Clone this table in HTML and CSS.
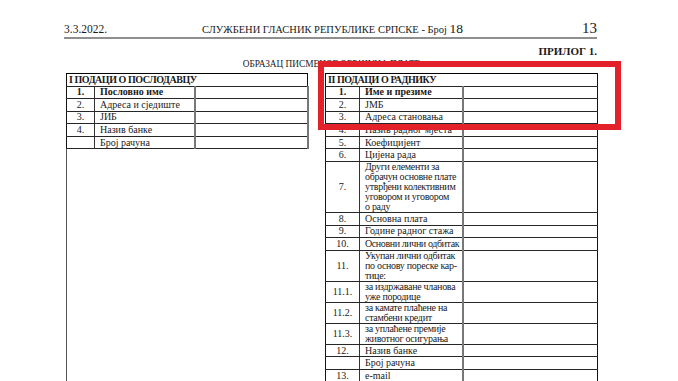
FILE: index.html
```html
<!DOCTYPE html>
<html lang="sr">
<head>
<meta charset="utf-8">
<title>Образац писменог обрачуна плате</title>
<link rel="stylesheet" href="styles.css">
</head>
<body>
<div class="page">
  <header class="running">
    <span class="date">3.3.2022.</span>
    <span class="journal">СЛУЖБЕНИ ГЛАСНИК РЕПУБЛИКЕ СРПСКЕ - Број <span class="big">18</span></span>
    <span class="pageno">13</span>
  </header>
  <div class="annex">ПРИЛОГ 1.</div>
  <div class="title">ОБРАЗАЦ ПИСМЕНОГ ОБРАЧУНА ПЛАТЕ</div>
  <div class="cols">
    <div class="leftcol">
      <table class="form employer">
        <colgroup><col class="c-num"><col class="c-lbl"><col class="c-val"></colgroup>
        <tr class="head"><td colspan="3">I ПОДАЦИ О ПОСЛОДАВЦУ</td></tr>
        <tr class="bold"><td class="num">1.</td><td class="lbl">Пословно име</td><td class="val"></td></tr>
        <tr><td class="num">2.</td><td class="lbl">Адреса и сједиште</td><td class="val"></td></tr>
        <tr><td class="num">3.</td><td class="lbl">ЈИБ</td><td class="val"></td></tr>
        <tr><td class="num">4.</td><td class="lbl">Назив банке</td><td class="val"></td></tr>
        <tr><td class="num"></td><td class="lbl">Број рачуна</td><td class="val"></td></tr>
      </table>
      <div class="blank"></div>
    </div>
    <table class="form worker">
      <colgroup><col class="c-num"><col class="c-lbl"><col class="c-val"></colgroup>
      <tr class="head"><td colspan="3">II ПОДАЦИ О РАДНИКУ</td></tr>
      <tr class="bold"><td class="num">1.</td><td class="lbl">Име и презиме</td><td class="val"></td></tr>
      <tr><td class="num">2.</td><td class="lbl">ЈМБ</td><td class="val"></td></tr>
      <tr><td class="num">3.</td><td class="lbl">Адреса становања</td><td class="val"></td></tr>
      <tr><td class="num">4.</td><td class="lbl">Назив радног мјеста</td><td class="val"></td></tr>
      <tr><td class="num">5.</td><td class="lbl">Коефицијент</td><td class="val"></td></tr>
      <tr><td class="num">6.</td><td class="lbl">Цијена рада</td><td class="val"></td></tr>
      <tr class="multi"><td class="num">7.</td><td class="lbl">Други елементи за<br>обрачун основне плате<br>утврђени колективним<br>уговором и уговором<br>о раду</td><td class="val"></td></tr>
      <tr><td class="num">8.</td><td class="lbl">Основна плата</td><td class="val"></td></tr>
      <tr><td class="num">9.</td><td class="lbl">Године радног стажа</td><td class="val"></td></tr>
      <tr><td class="num">10.</td><td class="lbl tight">Основни лични одбитак</td><td class="val"></td></tr>
      <tr class="multi"><td class="num">11.</td><td class="lbl">Укупан лични одбитак<br>по основу пореске кар-<br>тице:</td><td class="val"></td></tr>
      <tr class="multi"><td class="num">11.1.</td><td class="lbl">за издржаване чланова<br>уже породице</td><td class="val"></td></tr>
      <tr class="multi"><td class="num">11.2.</td><td class="lbl">за камате плаћене на<br>стамбени кредит</td><td class="val"></td></tr>
      <tr class="multi"><td class="num">11.3.</td><td class="lbl">за уплаћене премије<br>животног осигурања</td><td class="val"></td></tr>
      <tr><td class="num">12.</td><td class="lbl">Назив банке</td><td class="val"></td></tr>
      <tr><td class="num"></td><td class="lbl">Број рачуна</td><td class="val"></td></tr>
      <tr><td class="num">13.</td><td class="lbl">e-mail</td><td class="val"></td></tr>
    </table>
  </div>
</div>
<div class="highlight"></div>
</body>
</html>
```
FILE: styles.css
```css
html, body {
  margin: 0;
  padding: 0;
  background: #fff;
  height: 381px;
  overflow: hidden;
}
body {
  position: relative;
  font-family: "Liberation Serif", "Times New Roman", serif;
  color: #1a1a1a;
}
.page {
  margin-left: 64px;
  width: 533px;
  padding-top: 21px;
}
.running {
  display: grid;
  grid-template-columns: 1fr auto 1fr;
  align-items: baseline;
  font-size: 10.5px;
  line-height: 14px;
  border-bottom: 2px solid #8f8f8f;
}
.date { justify-self: start; font-size: 11.5px; }
.journal { justify-self: center; padding-left: 4px; }
.pageno { justify-self: end; font-size: 15px; }
.big { font-size: 13.5px; }
.annex {
  text-align: right;
  font-weight: bold;
  font-size: 11px;
  line-height: 12px;
  margin-top: 6px;
}
.title {
  text-align: center;
  font-size: 9.3px;
  line-height: 11px;
  margin-top: 2px;
  padding-left: 2px;
}
.cols {
  display: flex;
  align-items: flex-start;
  margin-top: 3px;
}
.leftcol {
  margin-left: 2px;
  width: 241px;
}
.form {
  border-collapse: collapse;
  table-layout: fixed;
  font-size: 10px;
  line-height: 10px;
}
.form td {
  border-top: 1px solid #262626;
  border-bottom: 1px solid #262626;
  padding: 0 3px 0 5px;
  height: 11.6px;
  vertical-align: middle;
  white-space: nowrap;
  overflow: visible;
}
.form .head td {
  font-weight: bold;
  font-size: 10px;
  letter-spacing: -0.45px;
  padding-left: 2px;
  height: 11.5px;
  border-top-color: #000;
  border-left: 1px solid #111;
  border-right: 1px solid #111;
}
.form .bold td { font-weight: bold; }
.form .num {
  text-align: center;
  border-left: 1px solid #111;
  border-right: 1px solid #333;
  padding: 0;
}
.form .lbl { border-right: 2px solid #777; }
.form .lbl.tight { letter-spacing: -0.4px; }
.form .multi td { height: auto; padding-top: 0; padding-bottom: 0; }
.form .multi .lbl { vertical-align: top; letter-spacing: -0.3px; }
.employer { width: 241px; }
.employer .c-num { width: 28px; }
.employer .c-lbl { width: 100px; }
.employer .c-val { width: 113px; }
.employer .val { border-right: 2px solid #777; }
.blank {
  height: 240px;
  border-left: 1px solid #555;
}
.worker {
  margin-left: 18px;
  width: 272px;
}
.worker .c-num { width: 34px; }
.worker .c-lbl { width: 103px; }
.worker .c-val { width: 135px; }
.worker .val { border-right: 1px solid #111; }
.highlight {
  position: absolute;
  left: 318px;
  top: 61px;
  width: 303px;
  height: 69px;
  box-sizing: border-box;
  border: 6px solid #e2212b;
}
```
